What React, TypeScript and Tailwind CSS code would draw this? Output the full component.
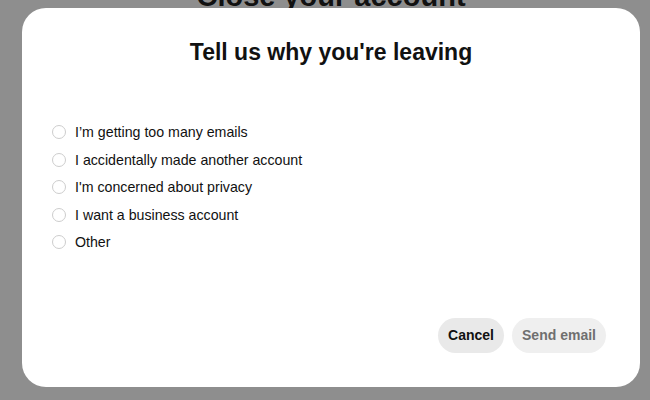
import React from 'react';

const reasons = [
  'I’m getting too many emails',
  'I accidentally made another account',
  "I'm concerned about privacy",
  'I want a business account',
  'Other',
];

export default function App() {
  return (
    <div
      className="relative h-[400px] w-[650px] overflow-hidden bg-[#8e8e8e]"
      style={{ fontFamily: '"Liberation Sans", Arial, sans-serif' }}
    >
      {/* page behind the overlay */}
      <h1 className="mt-[-21px] pl-[12px] text-center text-[29px] font-bold leading-[34px] text-[#111]">
        Close your account
      </h1>

      {/* Modal */}
      <div className="absolute left-[22px] top-[8px] flex h-[379px] w-[618px] flex-col rounded-[24px] bg-white">
        <h2 className="mt-[30px] text-center text-[23px] font-bold leading-[28px] text-[#111]">
          Tell us why you're leaving
        </h2>

        <div className="mt-[57px] flex flex-col gap-[9.5px] pl-[30px]">
          {reasons.map((r) => (
            <label key={r} className="flex h-[18px] items-center gap-[9px]">
              <span className="h-[14px] w-[14px] rounded-full border border-[#cdcdcd] bg-white" />
              <span className="text-[14.2px] leading-[18px] text-[#111]">{r}</span>
            </label>
          ))}
        </div>

        <div className="mt-auto mb-[34px] flex justify-end gap-[8px] pr-[34px]">
          <button className="h-[35px] w-[66px] rounded-full bg-[#e9e9e9] text-[14px] font-bold text-[#111]">
            Cancel
          </button>
          <button className="h-[35px] w-[94px] rounded-full bg-[#efefef] text-[14px] font-bold text-[#6f6f6f]">
            Send email
          </button>
        </div>
      </div>
    </div>
  );
}
